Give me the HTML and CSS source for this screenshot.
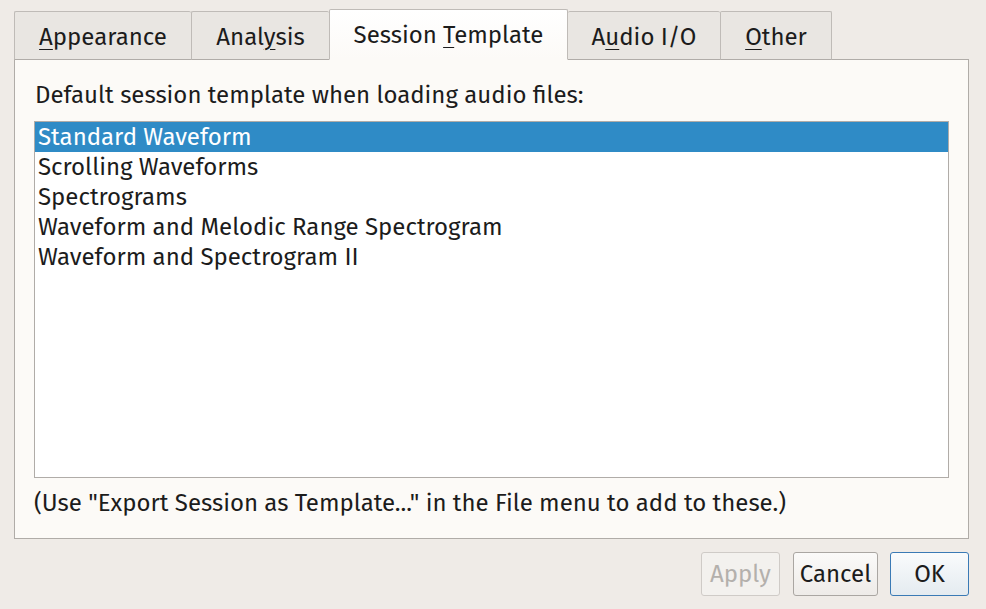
FILE: index.html
```html
<!DOCTYPE html>
<html>
<head>
<meta charset="utf-8">
<link rel="stylesheet" href="styles.css">
</head>
<body>
<div class="dialog">
  <div class="tabs">
    <div class="tab t1"><span><span class="u">A</span>ppearance</span></div>
    <div class="tab t2"><span>Anal<span class="u">y</span>sis</span></div>
    <div class="tab active t3"><span>Session <span class="u">T</span>emplate</span></div>
    <div class="tab t4"><span>A<span class="u">u</span>dio I/O</span></div>
    <div class="tab t5"><span><span class="u">O</span>ther</span></div>
  </div>
  <div class="panel">
    <div class="label">Default session template when loading audio files:</div>
    <div class="list">
      <div class="row selected">Standard Waveform</div>
      <div class="row">Scrolling Waveforms</div>
      <div class="row">Spectrograms</div>
      <div class="row">Waveform and Melodic Range Spectrogram</div>
      <div class="row">Waveform and Spectrogram II</div>
    </div>
    <div class="note">(Use "Export Session as Template..." in the File menu to add to these.)</div>
  </div>
  <div class="buttons">
    <div class="btn disabled apply">Apply</div>
    <div class="btn cancel">Cancel</div>
    <div class="btn default ok">OK</div>
  </div>
</div>
</body>
</html>
```
FILE: styles.css
```css
* { box-sizing: border-box; }
html, body {
  margin: 0;
  padding: 0;
  background: #efebe7;
  width: 986px;
  height: 609px;
  overflow: hidden;
}
body {
  font-family: "Fira Sans", "Noto Sans", "Open Sans", sans-serif;
  font-size: 24px;
  color: #1c1c1c;
}
.dialog {
  padding: 9px 17px 0 14px;
}
.tabs {
  display: flex;
  align-items: flex-end;
  height: 51px;
  margin-bottom: -1px;
  position: relative;
  z-index: 1;
}
.tab {
  height: 49px;
  background: #e9e6e2;
  border: 1px solid #bfbbb7;
  border-right: none;
  border-bottom: 1px solid #b0aca8;
  display: flex;
  align-items: center;
  justify-content: center;
  color: #1c1c1c;
  border-radius: 2px 2px 0 0;
  padding-top: 2px;
}
.t1 { width: 177px; }
.t2 { width: 138px; }
.t3 { width: 239px; }
.t4 { width: 152px; border-left: none; }
.t5 { width: 112px; border-right: 1px solid #bfbbb7; }
.tab.active {
  height: 51px;
  background: linear-gradient(#ffffff, #fcfaf7);
  border: 1px solid #bfbbb7;
  border-bottom: 1px solid #fcfaf7;
  padding-top: 0;
}
.u { text-decoration: underline; text-underline-offset: 4px; text-decoration-thickness: 1px; }
.panel {
  height: 480px;
  background: #fcfaf7;
  border: 1px solid #b0aca8;
  padding: 20px 19px 0 19px;
  display: flex;
  flex-direction: column;
}
.label {
  height: 30px;
  line-height: 30px;
  padding-left: 1px;
}
.list {
  margin-top: 11px;
  height: 357px;
  background: #ffffff;
  border: 1px solid #b0aca8;
  padding: 0;
}
.row {
  height: 30px;
  line-height: 30px;
  padding-left: 3px;
}
.row.selected {
  background: #2f8bc6;
  color: #ffffff;
}
.note {
  margin-top: 10px;
  height: 30px;
  line-height: 30px;
  padding-left: 0;
}
.buttons {
  display: flex;
  justify-content: flex-end;
  margin-top: 13px;
  gap: 13px;
}
.btn {
  height: 44px;
  border: 1px solid #aaa6a2;
  border-radius: 3px;
  background: linear-gradient(#fbfaf9, #eeebe8);
  display: flex;
  align-items: center;
  justify-content: center;
}
.apply { width: 79px; color: #b4b0ac; border-color: #cfcbc7; background: #f3f1ee; }
.cancel { width: 85px; margin-right: -1px; }
.ok { width: 79px; border-color: #3a7ab5; background: linear-gradient(#f9fbfc, #e4ebf0); }
```
